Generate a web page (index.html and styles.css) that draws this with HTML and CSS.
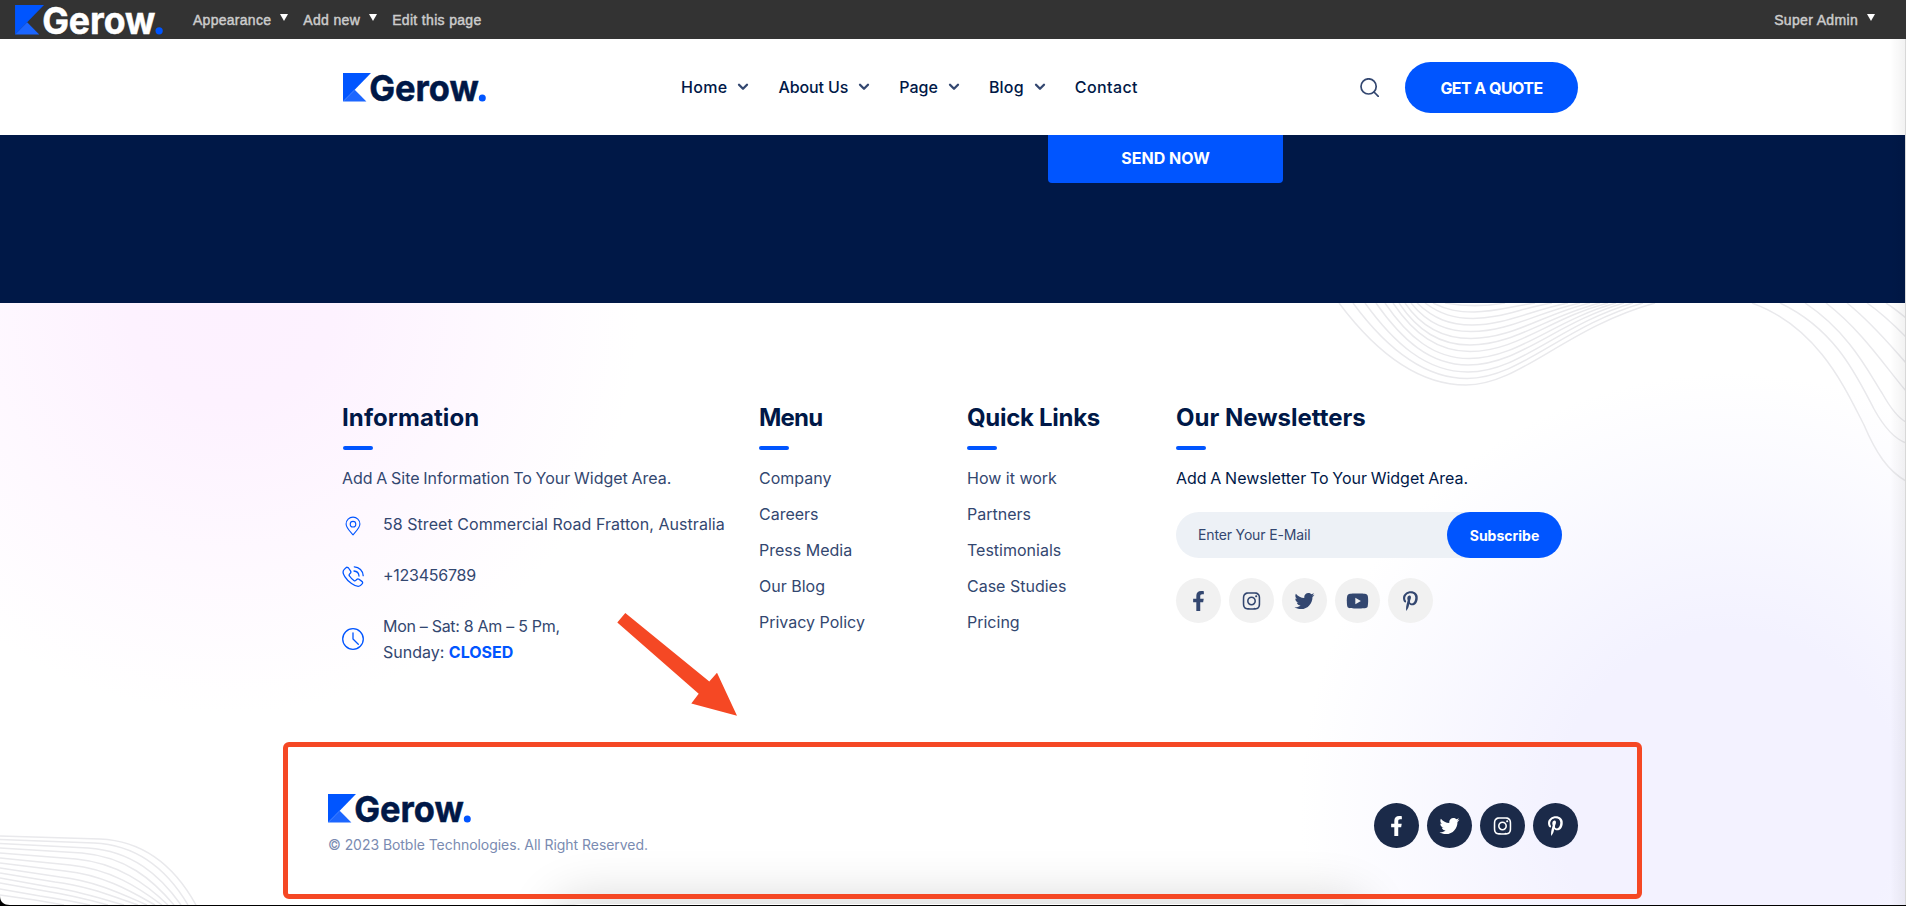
FILE: index.html
```
<!DOCTYPE html>
<html lang="en">
<head>
<meta charset="utf-8">
<title>Gerow</title>
<link rel="stylesheet" href="styles.css">
</head>
<body>
<svg class="defs" aria-hidden="true">
  <symbol id="facebook" viewBox="0 0 320 512"><path d="M279.14 288l14.22-92.66h-88.91v-60.13c0-25.35 12.42-50.06 52.24-50.06h40.42V6.26S260.43 0 225.36 0c-73.22 0-121.08 44.38-121.08 124.72v70.62H22.89V288h81.39v224h100.17V288z"/></symbol>
  <symbol id="twitter" viewBox="0 0 512 512"><path d="M459.37 151.716c.325 4.548.325 9.097.325 13.645 0 138.72-105.583 298.558-298.558 298.558-59.452 0-114.68-17.219-161.137-47.106 8.447.974 16.568 1.299 25.34 1.299 49.055 0 94.213-16.568 130.274-44.832-46.132-.975-84.792-31.188-98.112-72.772 6.498.974 12.995 1.624 19.818 1.624 9.421 0 18.843-1.3 27.614-3.573-48.081-9.747-84.143-51.98-84.143-102.985v-1.299c13.969 7.797 30.214 12.67 47.431 13.319-28.264-18.843-46.781-51.005-46.781-87.391 0-19.492 5.197-37.36 14.294-52.954 51.655 63.675 129.3 105.258 216.365 109.807-1.624-7.797-2.599-15.918-2.599-24.04 0-57.828 46.782-104.934 104.934-104.934 30.213 0 57.502 12.67 76.67 33.137 23.715-4.548 46.456-13.32 66.599-25.34-7.798 24.366-24.366 44.833-46.132 57.827 21.117-2.273 41.584-8.122 60.426-16.243-14.292 20.791-32.161 39.308-52.628 54.253z"/></symbol>
  <symbol id="instagram" viewBox="0 0 448 512"><path d="M224.1 141c-63.6 0-114.9 51.3-114.9 114.9s51.3 114.9 114.9 114.9S339 319.5 339 255.9 287.7 141 224.1 141zm0 189.6c-41.1 0-74.7-33.5-74.7-74.7s33.5-74.7 74.7-74.7 74.7 33.5 74.7 74.7-33.6 74.7-74.7 74.7zm146.4-194.3c0 14.9-12 26.8-26.8 26.8-14.9 0-26.8-12-26.8-26.8s12-26.8 26.8-26.8 26.8 12 26.8 26.8zm76.1 27.2c-1.7-35.9-9.9-67.7-36.2-93.9-26.2-26.2-58-34.4-93.9-36.2-37-2.1-147.9-2.1-184.9 0-35.8 1.7-67.6 9.9-93.9 36.1s-34.4 58-36.2 93.9c-2.1 37-2.1 147.9 0 184.9 1.7 35.9 9.9 67.7 36.2 93.9s58 34.4 93.9 36.2c37 2.1 147.9 2.1 184.9 0 35.9-1.7 67.7-9.9 93.9-36.2 26.2-26.2 34.4-58 36.2-93.9 2.1-37 2.1-147.8 0-184.8zM398.8 388c-7.8 19.6-22.9 34.7-42.6 42.6-29.5 11.7-99.5 9-132.1 9s-102.7 2.6-132.1-9c-19.6-7.8-34.7-22.9-42.6-42.6-11.7-29.5-9-99.5-9-132.1s-2.6-102.7 9-132.1c7.8-19.6 22.9-34.7 42.6-42.6 29.5-11.7 99.5-9 132.1-9s102.7-2.6 132.1 9c19.6 7.8 34.7 22.9 42.6 42.6 11.7 29.5 9 99.5 9 132.1s2.7 102.7-9 132.1z"/></symbol>
  <symbol id="youtube" viewBox="0 0 576 512"><path d="M549.655 124.083c-6.281-23.65-24.787-42.276-48.284-48.597C458.781 64 288 64 288 64S117.22 64 74.629 75.486c-23.497 6.322-42.003 24.947-48.284 48.597-11.412 42.867-11.412 132.305-11.412 132.305s0 89.438 11.412 132.305c6.281 23.65 24.787 41.5 48.284 47.821C117.22 448 288 448 288 448s170.78 0 213.371-11.486c23.497-6.321 42.003-24.171 48.284-47.821 11.412-42.867 11.412-132.305 11.412-132.305s0-89.438-11.412-132.305zm-317.51 213.508V175.185l142.739 81.205-142.739 81.201z"/></symbol>
  <symbol id="pinterest" viewBox="0 0 384 512"><path d="M204 6.5C101.4 6.5 0 74.9 0 185.6 0 256 39.6 296 63.6 296c9.900 0 15.600-27.600 15.600-35.400 0-9.300-23.700-29.100-23.700-67.800 0-80.400 61.200-137.400 140.400-137.400 68.100 0 118.500 38.700 118.500 109.800 0 53.100-21.300 152.700-90.300 152.700-24.900 0-46.200-18-46.200-43.800 0-37.800 26.400-74.400 26.400-113.400 0-66.200-93.900-54.200-93.900 25.800 0 16.800 2.100 35.400 9.600 50.700-13.800 59.400-42 147.900-42 209.100 0 18.900 2.700 37.500 4.500 56.400 3.400 3.800 1.700 3.400 6.900 1.500 50.400-69 48.600-82.500 71.400-172.800 12.300 23.400 44.100 36 69.300 36 106.200 0 147-103.500 147-196.800C384 71.300 298.200 6.500 204 6.500z"/></symbol>
  <symbol id="chevron" viewBox="0 0 12 8"><path d="M2 1.800l4 4 4-4" fill="none" stroke="#334770" stroke-width="2.3" stroke-linecap="round" stroke-linejoin="round"/></symbol>
  <symbol id="logo" viewBox="0 0 143 29" overflow="visible">
    <path fill="#0055ff" d="M0 0h28L11.7 16.7 0 28.600z"/>
    <path fill="#1c66ff" d="M0 28.600l11.700-11.900 11.700 11.900z"/>
    <text x="26.2" y="27.8" textLength="109.5" lengthAdjust="spacingAndGlyphs" class="logo-text">Gerow</text>
    <circle cx="139.3" cy="24.9" r="3.5" fill="#0055ff"/>
  </symbol>
</svg>

<div class="admin-bar">
  <svg class="admin-logo"><use href="#logo"/></svg>
  <a class="drop admin-appearance">Appearance</a>
  <a class="drop admin-add">Add new</a>
  <a class="admin-edit">Edit this page</a>
  <a class="drop admin-user">Super Admin</a>
</div>

<header class="header">
  <svg class="logo"><use href="#logo"/></svg>
  <nav class="nav">
    <a class="nav-home">Home<svg><use href="#chevron"/></svg></a>
    <a class="nav-about">About Us<svg><use href="#chevron"/></svg></a>
    <a class="nav-page">Page<svg><use href="#chevron"/></svg></a>
    <a class="nav-blog">Blog<svg><use href="#chevron"/></svg></a>
    <a class="nav-contact">Contact</a>
  </nav>
  <svg class="search" viewBox="0 0 19 19"><circle cx="8.600" cy="8.400" r="7.600"/><path d="M14 14l4.300 4.300"/></svg>
  <a class="quote">GET A QUOTE</a>
</header>

<section class="contact"><button class="send">SEND NOW</button></section>

<footer class="footer">
  <svg class="wave-top" viewBox="0 0 606 190">
    <path d="M39 0C72 44 115 82 166 82C220 82 265 25 355 0"/>
    <path d="M53 0C84 42 122 75.500 167 75.500C220 75.500 263 23 343 0"/>
    <path d="M65 0C94 40 126 69 168 69C220 69 260 21 333 0"/>
    <path d="M76 0C102 37 130 62 168 62C219 62 257 19 324 0"/>
    <path d="M85 0C108 34 134 55.500 169 55.500C218 55.500 254 17 316 0"/>
    <path d="M93 0C114 31 138 48.500 170 48.500C217 48.500 250 15 308 0"/>
    <path d="M99 0C118 28 140 42 170 42C215 42 247 13 300 0"/>
    <path d="M105 0C122 25 144 35.500 171 35.500C213 35.500 243 11 290 0"/>
    <path d="M111 0C128 21 147 28.500 171 28.500C210 28.500 238 9 280 0"/>
    <path d="M117 0C134 16 150 22 172 22C205 22 232 7 268 0"/>
    <path d="M125 0C140 11 154 15.500 173 15.500C200 15.500 222 5 252 0"/>
    <path d="M133 0C147 7 158 9 174 9C195 9 214 3 235 0"/>
    <path d="M145 0C165 3.500 185 3.500 205 0"/>
    <path d="M452 0C518 24 545 85 564 122C576 150 588 168 606 178"/>
    <path d="M480 0C537 27 558 76 574 106C585 126 595 136 606 140"/>
    <path d="M505 0C550 30 569 70 582 90C591 106 598 115 606 119"/>
    <path d="M526 0C562 28 584 62 606 88"/>
    <path d="M547 0C572 20 590 42 606 60"/>
    <path d="M567 0C583 11 596 24 606 34"/>
    <path d="M586 0C594 5 600 10 606 15"/>
  </svg>
  <svg class="wave-bottom" viewBox="0 0 200 70">
    <path d="M0 1L100 4C145 6 175 32 196 70M0 4.500L94 8C138 10 168 36 188 70M0 8.500L88 13C132 16 160 40 181 70M0 13L82 18C126 22 152 44 174 70M0 18L76 24C118 28 146 49 168 70M0 23L70 30C111 34 139 53 162 70M0 28L65 36C104 40 132 57 155 70M0 33L60 42C96 46 124 60 147 70M0 38L55 47C88 51 114 62 138 70M0 43L50 52C80 56 105 65 124 70M0 48L45 56C70 60 90 65 108 70M0 54L40 61C60 64 76 67 90 70M0 60L35 65L64 70"/>
  </svg>
  <div class="dock-shadow"></div>

  <div class="widgets">
    <section>
      <h2 class="title title-info">Information</h2>
      <p class="site-info">Add A Site Information To Your Widget Area.</p>
      <ul class="info">
        <li class="address"><svg viewBox="0 0 22 22"><path d="M11 19.800C8.500 16.800 4.100 13 4.100 9a6.900 6.900 0 0 1 13.800 0C17.900 13 13.500 16.800 11 19.800z"/><circle cx="11" cy="9.200" r="2.800"/></svg><span>58 Street Commercial Road Fratton, Australia</span></li>
        <li class="phone"><svg viewBox="0 0 22 22"><path d="M2.300 3.400l1.500-1.500c.9-.9 2-.8 2.700.1l2 2.900c.6.9.5 1.700-.2 2.400l-.8.8c-.6.6-.5 1.200 0 1.900c1 1.500 2.600 3.200 4.400 4.500c.7.500 1.300.5 1.900-.1l.9-.9c.7-.7 1.500-.8 2.300-.2l2.900 2.100c.9.600 1 1.700.2 2.500l-1.500 1.500c-1.700 1.700-5.200.8-9.100-1.900c-2.700-1.900-5.100-4.300-6.700-6.900C.6 7.500.6 5.100 2.300 3.400zM12.300.8a9.300 9.300 0 0 1 8.900 8.900M12 5a5.500 5.500 0 0 1 5 5"/></svg><span>+123456789</span></li>
        <li class="hours"><svg viewBox="0 0 22 22"><circle cx="11" cy="11" r="10.300"/><path d="M11 4.800V11l5.300 5.300"/></svg><span><span class="weekdays">Mon – Sat: 8 Am – 5 Pm,</span><br>Sunday: <b>CLOSED</b></span></li>
      </ul>
    </section>
    <section>
      <h2 class="title title-menu">Menu</h2>
      <ul class="links"><li>Company</li><li>Careers</li><li>Press Media</li><li>Our Blog</li><li>Privacy Policy</li></ul>
    </section>
    <section>
      <h2 class="title title-quick">Quick Links</h2>
      <ul class="links"><li>How it work</li><li>Partners</li><li>Testimonials</li><li>Case Studies</li><li>Pricing</li></ul>
    </section>
    <section>
      <h2 class="title">Our Newsletters</h2>
      <p class="news-info">Add A Newsletter To Your Widget Area.</p>
      <div class="subscribe"><span>Enter Your E-Mail</span><button>Subscribe</button></div>
      <div class="social">
        <a><svg><use href="#facebook"/></svg></a>
        <a><svg><use href="#instagram"/></svg></a>
        <a><svg><use href="#twitter"/></svg></a>
        <a><svg><use href="#youtube"/></svg></a>
        <a><svg><use href="#pinterest"/></svg></a>
      </div>
    </section>
  </div>

  <div class="bottom">
    <div>
      <svg class="logo"><use href="#logo"/></svg>
      <p class="copyright">© 2023 Botble Technologies. All Right Reserved.</p>
    </div>
    <div class="social social-dark">
      <a><svg><use href="#facebook"/></svg></a>
      <a><svg><use href="#twitter"/></svg></a>
      <a><svg><use href="#instagram"/></svg></a>
      <a><svg><use href="#pinterest"/></svg></a>
    </div>
  </div>
</footer>

<svg class="arrow" viewBox="0 0 120 104"><path d="M8.300 0L92.300 68.400 100 59.700 120 102.700 74.300 90.400 81.700 80.700 0.300 9.400z"/></svg>
<div class="highlight"></div>
<div class="edge"></div>
<svg class="corner" viewBox="0 0 10 10"><path d="M0 0C0 6 4 9 10 9V10H0z"/></svg>
</body>
</html>
```
FILE: styles.css
```
* { box-sizing: border-box; margin: 0; padding: 0; }
body {
  position: relative;
  width: 1906px;
  height: 906px;
  overflow: hidden;
  background: #fff;
  font-family: Inter, "Liberation Sans", sans-serif;
  font-size: 16px;
  line-height: 26px;
  color: #334770;
}
ul { list-style: none; }
svg { display: block; }
button { border: 0; font-family: inherit; color: #fff; background: #0055ff; font-weight: 700; }
.defs { position: absolute; width: 0; height: 0; }
.logo-text { font: 700 36px / 29px Inter, sans-serif; fill: currentColor; stroke: currentColor; stroke-width: 0.5px; }

/* Admin bar */
.admin-bar {
  display: flex;
  align-items: center;
  height: 39px;
  padding: 0 30px 0 15px;
  background: #333;
  color: #ccc;
  font: 14px "Liberation Sans", sans-serif;
  -webkit-text-stroke: 0.45px #ccc;
}
.admin-logo { width: 148px; height: 30px; margin-right: 30px; color: #fff; -webkit-text-stroke: 0; overflow: visible; }
.drop { display: flex; align-items: center; }
.drop::after {
  content: "";
  margin: -4px 0 0 9px;
  border: 4px solid transparent;
  border-top: 7px solid #fff;
  border-bottom: 0;
}
.admin-appearance { letter-spacing: 0.27px; }
.admin-add { margin-left: 15px; letter-spacing: 0.35px; }
.admin-edit { margin-left: 15px; letter-spacing: 0.33px; }
.admin-user { margin-left: auto; margin-right: 1px; letter-spacing: 0.33px; }

/* Header */
.header { display: flex; align-items: center; height: 96px; padding: 0 328px 0 342px; color: #001847; }
.logo { width: 143px; height: 29px; color: #001847; overflow: visible; }
.header .logo { margin-left: 1px; }
.nav { display: flex; gap: 29px; margin-left: 195px; font-weight: 450; }
.nav a { display: flex; align-items: center; }
.nav svg { width: 12px; height: 8px; margin-left: 10px; }
.nav-home { letter-spacing: 0.3px; }
.nav-about { letter-spacing: -0.1px; }
.nav-blog { letter-spacing: 0.2px; }
.nav-contact { letter-spacing: 0.4px; }
.search { width: 19px; height: 19px; margin-left: auto; fill: none; stroke: #334770; stroke-width: 1.7; stroke-linecap: round; }
.quote {
  width: 173px;
  height: 51px;
  margin-left: 26px;
  border-radius: 26px;
  background: #0055ff;
  color: #fff;
  font-weight: 700;
  line-height: 52px;
  text-align: center;
  letter-spacing: -0.55px;
}

/* Contact strip */
.contact { height: 168px; background: #001847; padding-left: 1048px; }
.send { display: block; width: 235px; height: 48px; padding-bottom: 3px; border-radius: 0 0 4px 4px; font-size: 16px; }

/* Footer */
.footer {
  position: relative;
  height: 603px;
  padding-top: 99px;
  background:
    radial-gradient(circle 430px at 1730px 500px, #f3f2ff 0, #f3f2ff 40%, rgba(243, 242, 255, 0) 100%),
    radial-gradient(circle 410px at 230px 0, #fdf1ff 0, #fdf2ff 25%, rgba(253, 242, 255, 0) 100%),
    #fff;
}
.wave-top, .wave-bottom { position: absolute; fill: none; stroke: #e9e9ec; stroke-width: 1.5; }
.wave-top { top: 0; right: 0; width: 606px; height: 190px; }
.wave-bottom { bottom: 1px; left: 0; width: 200px; height: 70px; }
.widgets { position: relative; display: grid; grid-template-columns: 417px 208px 209px 402px; height: 264px; margin-left: 342px; }
.title { color: #001847; font-size: 24px; font-weight: 700; line-height: 31px; }
.title::after { content: ""; display: block; width: 30px; height: 4px; margin: 13px 0 15px; border-radius: 2px; background: #0055ff; }
.title-info { letter-spacing: 0.1px; }
.title-info::after { margin-left: 1px; }
.title-menu { letter-spacing: -0.8px; }
.title-quick { letter-spacing: -0.3px; }
.site-info { word-spacing: -0.8px; }
.info { display: flex; flex-direction: column; gap: 25px; margin-top: 20px; }
.info li { display: flex; align-items: center; gap: 19px; white-space: nowrap; }
.info svg { width: 22px; height: 22px; fill: none; stroke: #0055ff; stroke-width: 1.3; stroke-linecap: round; stroke-linejoin: round; position: relative; top: 2px; }
.info .address svg { stroke-width: 1.1; }
.info .hours svg { top: 0; }
.address { letter-spacing: 0.05px; }
.phone { letter-spacing: -0.25px; }
.weekdays { letter-spacing: -0.3px; }
.info b { color: #0055ff; }
.links { display: grid; gap: 10px; }
.news-info { color: #001847; word-spacing: -0.8px; }
.subscribe { display: flex; width: 386px; height: 46px; margin-top: 21px; padding-left: 22px; border-radius: 23px; background: #edf1f6; font-size: 14px; line-height: 46px; letter-spacing: -0.15px; }
.subscribe button { width: 115px; margin-left: auto; border-radius: 23px; font-size: 14px; }
.social { display: flex; gap: 8px; margin-top: 20px; }
.social a { display: grid; place-items: center; width: 45px; height: 45px; border-radius: 50%; background: #f1f1f1; }
.social svg { width: 23px; height: 20px; fill: #334770; }
.social-dark { margin: 0; }
.social-dark a { background: #1b2a49; }
.social-dark svg { fill: #fff; }
.bottom { position: relative; display: flex; justify-content: space-between; align-items: center; margin: 128px 328px 0; }
.copyright { margin-top: 10px; color: #7a8bb1; font-size: 14px; line-height: 24px; letter-spacing: -0.05px; }
.dock-shadow {
  position: absolute;
  left: 0;
  bottom: 0;
  width: 1906px;
  height: 60px;
  overflow: hidden;
}
.dock-shadow::after {
  content: "";
  position: absolute;
  left: 560px;
  top: 58px;
  width: 800px;
  height: 60px;
  border-radius: 20px;
  box-shadow: 0 0 50px 6px rgba(0, 0, 0, 0.16);
}

/* Annotations and window edges */
.arrow { position: absolute; left: 617px; top: 613px; width: 120px; height: 104px; fill: #f54824; }
.highlight { position: absolute; left: 283px; top: 742px; width: 1359px; height: 157px; border: 5px solid #f54824; border-radius: 6px; }
.edge { position: absolute; top: 39px; right: 0; bottom: 0; width: 16px; border-right: 1px solid #d8d8d8; background: linear-gradient(90deg, transparent, rgba(0, 0, 0, 0.05)); }
.corner { position: absolute; left: 0; bottom: 0; width: 10px; height: 10px; }
body::after { content: ""; position: absolute; left: 0; right: 0; bottom: 0; height: 1px; background: #000; }
```
